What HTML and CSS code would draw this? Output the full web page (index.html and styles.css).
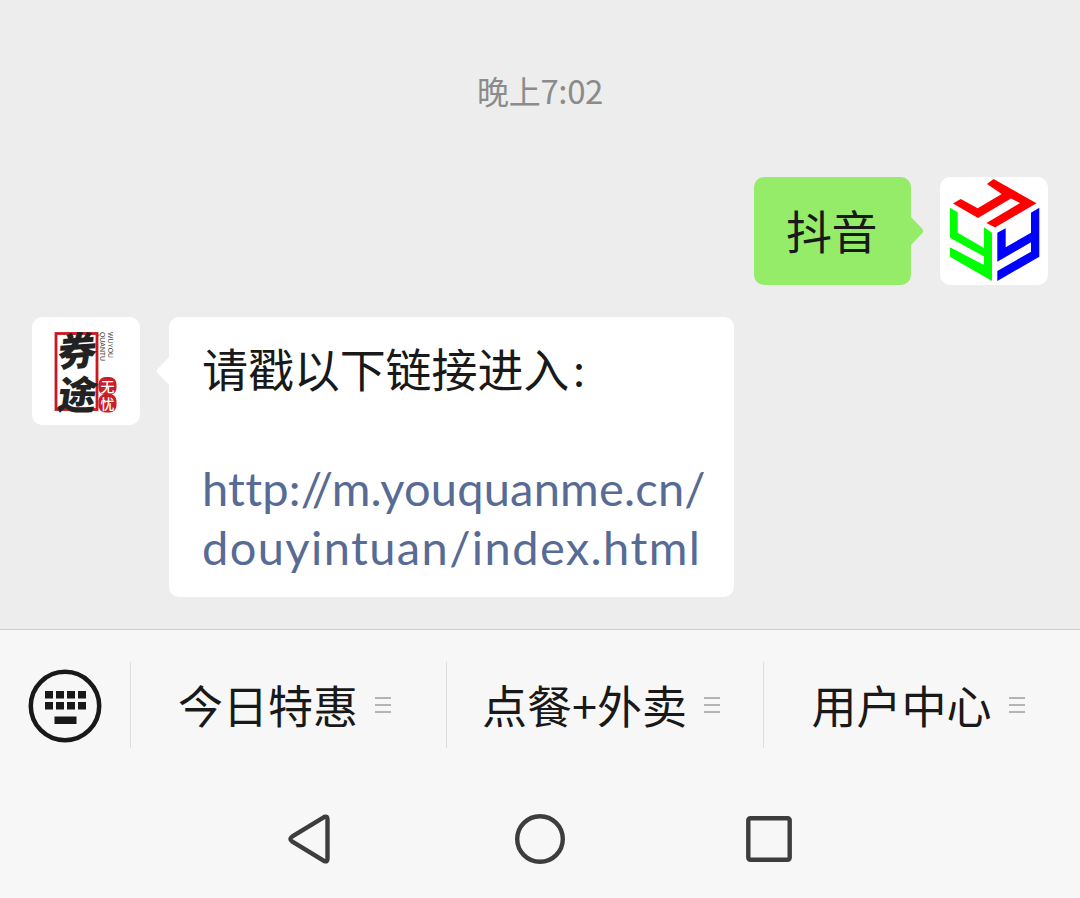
FILE: index.html
```html
<!DOCTYPE html>
<html lang="zh-CN">
<head>
<meta charset="utf-8">
<title>聊天</title>
<link rel="stylesheet" href="styles.css">
</head>
<body>
<main class="chat">
  <time class="time">晚上<span class="digits">7:02</span></time>
  <section class="row sent">
    <div class="bubble green">抖音<svg class="tail" viewBox="0 0 14 30"><path d="M0 0 12.5 13Q14 15 12.5 17L0 30Z"/></svg></div>
    <svg class="avatar" viewBox="0 0 108 108">
      <path fill="#f00" d="M53.500 2 96.500 26.300 55 50.500 46.500 46 80 26 71 21.500 38 41 13 26.500 20.700 22 37.700 31.300 61.700 17 47 7Z"/>
      <path fill="#0f0" d="M10 30.700 17.700 35.300V55.700L44 71V50.300L52 55.700V104L10 79.700V70.300L44 88V79.500L10 60.700Z"/>
      <path fill="#00f" d="M57.300 55.700 65.700 51.300V70.300L91 55.700V35.700L99.300 30.700V79.700L57.300 104V94L91 74.700V65.300L57.300 84.700Z"/>
    </svg>
  </section>
  <section class="row received">
    <svg class="avatar" viewBox="0 0 108 108">
      <rect x="24" y="16.500" width="41" height="76" fill="none" stroke="#c91920" stroke-width="2.800"/>
      <text class="brush" transform="translate(25 50) rotate(-4) skewX(-8)">券</text>
      <text class="brush" transform="translate(24 92) rotate(1) skewX(-7)">途</text>
      <g fill="#c71f25"><rect x="66.500" y="60" width="18" height="18" rx="7"/><rect x="66.500" y="77" width="18" height="18.500" rx="7"/></g>
      <text class="seal" x="68.500" y="74.500">无</text>
      <text class="seal" x="68.500" y="92">忧</text>
      <text class="latin" transform="translate(76 15) rotate(90)" textLength="26" lengthAdjust="spacingAndGlyphs">WUYOU</text>
      <text class="latin" transform="translate(68 15) rotate(90)" textLength="29" lengthAdjust="spacingAndGlyphs">QUANTU</text>
    </svg>
    <div class="bubble white"><svg class="tail" viewBox="0 0 14 30"><path d="M14 0 1.500 13Q0 15 1.500 17L14 30Z"/></svg><p class="line">请戳以下链接进入<span class="colon">:</span></p><a class="link"><span class="line url-host">http://m.youquanme.cn/</span><span class="line url-path">douyintuan/index.html</span></a></div>
  </section>
</main>
<footer class="footer">
  <nav class="menu">
    <div class="keyboard"><svg width="74" height="74" viewBox="0 0 74 74"><circle cx="37" cy="37" r="34.200" fill="none" stroke="#191919" stroke-width="4.500"/><path fill="#191919" d="M17 22h8v7.500h-8zM28 22h8v7.500h-8zM39 22h8v7.500h-8zM50 22h8v7.500h-8zM17 33h8v7.500h-8zM28 33h8v7.500h-8zM39 33h8v7.500h-8zM50 33h8v7.500h-8zM26.500 47.500h22v7.500h-22z"/></svg></div>
    <div class="item">今日特惠<i class="bars"></i></div>
    <div class="item">点餐+外卖<i class="bars"></i></div>
    <div class="item">用户中心<i class="bars"></i></div>
  </nav>
  <nav class="system">
    <svg viewBox="0 0 54 54"><path d="M40.500 4.800 8 24.700Q4.800 27 8 29.300L40.500 49.200Q43.500 50.200 43.500 46.500V7.500Q43.500 3.800 40.500 4.800Z"/></svg>
    <svg viewBox="0 0 54 54"><circle cx="27" cy="27" r="22.800"/></svg>
    <svg viewBox="0 0 54 54"><rect x="6.300" y="6.300" width="41.400" height="41.400" rx="2"/></svg>
  </nav>
</footer>
</body>
</html>
```
FILE: styles.css
```css
* { box-sizing: border-box; }
body { margin: 0; width: 1080px; height: 898px; overflow: hidden; background: #f7f7f7; color: #191919; font-family: "Noto Sans CJK SC", sans-serif; display: flex; flex-direction: column; }
.chat { height: 629px; background: #ededed; padding: 66px 32px 0; display: flex; flex-direction: column; }
.time { height: 48px; line-height: 48px; font-size: 32px; color: #8b8b8b; text-align: center; margin-bottom: 63px; letter-spacing: -0.3px; }
.digits { font-size: 33px; letter-spacing: -0.4px; }
.row { display: flex; align-items: flex-start; gap: 29px; }
.sent { justify-content: flex-end; margin-bottom: 32px; }
.avatar { width: 108px; height: 108px; border-radius: 10px; background: #fff; flex: none; }
.bubble { position: relative; border-radius: 10px; font-size: 46px; line-height: 59.3px; }
.tail { position: absolute; width: 14px; height: 30px; top: 39px; }
.green { width: 157px; height: 108px; padding: 23px 0 0 32px; background: #95ec69; letter-spacing: -0.5px; }
.green .tail { left: 156px; fill: #95ec69; }
.white { width: 565px; height: 280px; padding: 21px 0 0 33px; background: #fff; }
.white .tail { right: 564px; fill: #fff; }
.line { display: block; margin: 0; white-space: nowrap; letter-spacing: -0.1px; }
.colon { font-family: Lato, sans-serif; margin-left: 4px; }
.link { display: block; margin-top: 59.5px; color: #576b95; font-family: Lato, sans-serif; font-size: 47px; line-height: 59px; }
.url-host { letter-spacing: 0.2px; }
.url-path { letter-spacing: 1.4px; }
.brush { font: 900 39px "Noto Sans CJK SC", sans-serif; fill: #222; }
.seal { font: 500 14px "Noto Sans CJK SC", sans-serif; fill: #fff; }
.latin { font: 8px "Liberation Sans", sans-serif; fill: #444; }
.footer { border-top: 1px solid #ccc; height: 269px; }
.menu { display: flex; height: 118px; padding-top: 32px; }
.keyboard { width: 130px; height: 86px; padding: 7px 0 0 28px; }
.item { height: 86px; width: 317px; border-left: 1px solid #dedede; display: flex; align-items: center; justify-content: center; gap: 17px; font-size: 45px; line-height: 84px; padding-right: 8px; }
.item:nth-child(2) { width: 316px; }
.bars { width: 16px; height: 16px; background: repeating-linear-gradient(#b4b4b4 0 2px, transparent 2px 7px); }
.system { display: flex; justify-content: center; gap: 175px; padding-top: 64px; }
.system svg { width: 54px; height: 54px; fill: none; stroke: #3d3d3d; stroke-width: 4.400; }
```
